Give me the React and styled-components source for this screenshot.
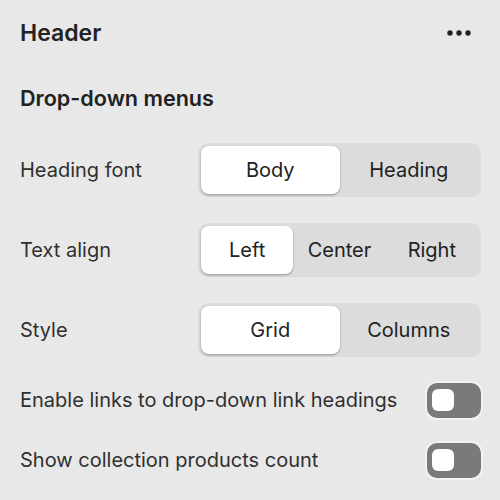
import React from "react";
import styled, { createGlobalStyle } from "styled-components";

const GlobalStyle = createGlobalStyle`
  html, body {
    margin: 0;
    padding: 0;
    background: #e8e8e8;
  }
  body {
    font-family: Inter, "Noto Sans", sans-serif;
    color: #303030;
  }
`;

function Segmented({ options, value }) {
  return (
    <SegGroup>
      {options.map((opt) => (
        <SegButton key={opt} $active={opt === value}>
          {opt}
        </SegButton>
      ))}
    </SegGroup>
  );
}

function Toggle({ on }) {
  return (
    <ToggleTrack $on={on}>
      <ToggleKnob $on={on} />
    </ToggleTrack>
  );
}

function App() {
  return (
    <>
      <GlobalStyle />
      <Panel>
        <TopBar>
          <Title>Header</Title>
          <MoreButton aria-label="More">
            <svg width="28" height="8" viewBox="0 0 28 8">
              <circle cx="5" cy="4" r="2.7" fill="#222" />
              <circle cx="14" cy="4" r="2.7" fill="#222" />
              <circle cx="23" cy="4" r="2.7" fill="#222" />
            </svg>
          </MoreButton>
        </TopBar>
        <SectionTitle>Drop-down menus</SectionTitle>
        <SegRows>
          <Row>
            <Label>Heading font</Label>
            <Segmented options={["Body", "Heading"]} value="Body" />
          </Row>
          <Row>
            <Label>Text align</Label>
            <Segmented options={["Left", "Center", "Right"]} value="Left" />
          </Row>
          <Row>
            <Label>Style</Label>
            <Segmented options={["Grid", "Columns"]} value="Grid" />
          </Row>
        </SegRows>
        <ToggleRows>
          <ToggleRow>
            <Label>Enable links to drop-down link headings</Label>
            <Toggle on={false} />
          </ToggleRow>
          <ToggleRow>
            <Label>Show collection products count</Label>
            <Toggle on={false} />
          </ToggleRow>
        </ToggleRows>
      </Panel>
    </>
  );
}

export default App;

const Panel = styled.div`
  width: 500px;
  height: 500px;
  box-sizing: border-box;
  padding: 0 19px 0 20px;
  display: flex;
  flex-direction: column;
`;

const TopBar = styled.div`
  height: 66px;
  display: flex;
  align-items: center;
  justify-content: space-between;
`;

const Title = styled.h1`
  margin: 0;
  font-size: 23px;
  font-weight: 600;
  color: #222;
`;

const MoreButton = styled.button`
  border: 0;
  background: none;
  padding: 0;
  margin-right: 8px;
  display: flex;
  align-items: center;
  cursor: pointer;
`;

const SectionTitle = styled.h2`
  margin: 18px 0 0;
  height: 28px;
  line-height: 28px;
  font-size: 21.6px;
  font-weight: 600;
  color: #222;
`;

const SegRows = styled.div`
  margin-top: 31px;
  display: flex;
  flex-direction: column;
  gap: 26px;
`;

const Row = styled.div`
  display: flex;
  align-items: center;
`;

const Label = styled.span`
  flex: 1;
  font-size: 20px;
  color: #303030;
  white-space: nowrap;
`;

const SegGroup = styled.div`
  width: 283px;
  height: 54px;
  box-sizing: border-box;
  padding: 3px;
  border-radius: 10px;
  background: #dcdcdc;
  display: flex;
`;

const SegButton = styled.div`
  flex: 1;
  display: flex;
  align-items: center;
  justify-content: center;
  border-radius: 8px;
  font-size: 20px;
  color: #222;
  background: ${(p) => (p.$active ? "#ffffff" : "transparent")};
  box-shadow: ${(p) =>
    p.$active ? "0 1px 2px rgba(0,0,0,0.25), 0 2px 3px rgba(0,0,0,0.08)" : "none"};
`;

const ToggleRows = styled.div`
  margin-top: 23px;
  display: flex;
  flex-direction: column;
  gap: 20px;
`;

const ToggleRow = styled.div`
  height: 40px;
  display: flex;
  align-items: center;
`;

const ToggleTrack = styled.div`
  width: 54px;
  height: 35px;
  box-sizing: border-box;
  border-radius: 10px;
  background: ${(p) => (p.$on ? "#303030" : "#7a7a7a")};
  box-shadow: 0 0 0 2px #f2f2f2;
  padding: 6px 5px;
  display: flex;
  justify-content: ${(p) => (p.$on ? "flex-end" : "flex-start")};
`;

const ToggleKnob = styled.div`
  width: 22px;
  height: 22px;
  border-radius: 6px;
  background: #ffffff;
`;
